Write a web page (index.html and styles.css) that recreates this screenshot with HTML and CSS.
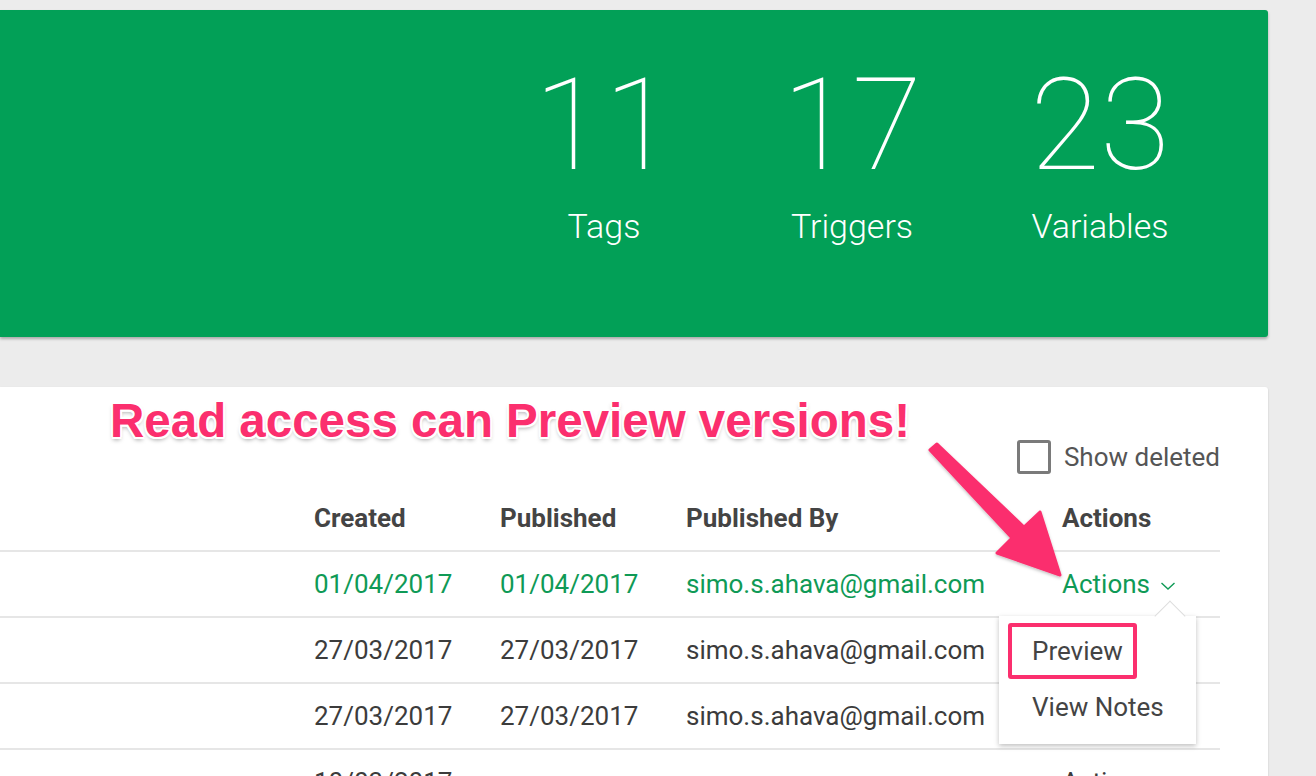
FILE: index.html
```html
<!DOCTYPE html>
<html>
<head>
<meta charset="utf-8">
<link rel="stylesheet" href="styles.css">
</head>
<body>
<div class="page">
  <section class="summary">
    <div class="stat"><div class="stat-num">11</div><div class="stat-label">Tags</div></div>
    <div class="stat"><div class="stat-num">17</div><div class="stat-label">Triggers</div></div>
    <div class="stat"><div class="stat-num">23</div><div class="stat-label">Variables</div></div>
  </section>

  <section class="versions">
    <div class="annotation">Read access can Preview versions!</div>
    <div class="toolbar">
      <label class="check"><span class="box"></span><span>Show deleted</span></label>
    </div>
    <div class="row head">
      <div></div><div>Created</div><div>Published</div><div>Published By</div><div>Actions</div>
    </div>
    <div class="row live">
      <div></div><div>01/04/2017</div><div>01/04/2017</div><div>simo.s.ahava@gmail.com</div>
      <div class="actions-cell">
        <span class="actions-link">Actions
          <svg class="chev" width="16" height="10" viewBox="0 0 16 10"><polyline points="1.5,2 8,8 14.5,2" fill="none" stroke="#0f9a56" stroke-width="1.4"/></svg>
        </span>
        <div class="menu">
          <div class="menu-caret"></div>
          <div class="menu-item first"><span class="highlight">Preview</span></div>
          <div class="menu-item">View Notes</div>
        </div>
      </div>
    </div>
    <div class="row">
      <div></div><div>27/03/2017</div><div>27/03/2017</div><div>simo.s.ahava@gmail.com</div><div>Actions</div>
    </div>
    <div class="row">
      <div></div><div>27/03/2017</div><div>27/03/2017</div><div>simo.s.ahava@gmail.com</div><div>Actions</div>
    </div>
    <div class="row">
      <div></div><div>10/03/2017</div><div></div><div></div><div>Actions</div>
    </div>
  </section>
</div>

<svg class="arrow" width="1316" height="776" viewBox="0 0 1316 776">
  <defs>
    <filter id="sh" x="-20%" y="-20%" width="140%" height="140%">
      <feDropShadow dx="0" dy="1.5" stdDeviation="1.5" flood-color="#000" flood-opacity="0.25"/>
    </filter>
  </defs>
  <path filter="url(#sh)" d="M930,450 L1012,538 L997,553 L1060,575 L1040,512 L1024,527 L937,444 Z" fill="#fb2f6e" stroke="#fb2f6e" stroke-width="3" stroke-linejoin="round"/>
</svg>
</body>
</html>
```

FILE: styles.css
```css
* { box-sizing: border-box; }

body {
  margin: 0;
  background: #ececec;
  font-family: Roboto, "Noto Sans", sans-serif;
  overflow: hidden;
  height: 776px;
}

.page {
  width: 1268px;
  padding-top: 10px;
}

.summary {
  height: 327px;
  background: #02a057;
  border-radius: 0 3px 3px 0;
  box-shadow: 0 2px 3px rgba(0, 0, 0, 0.28);
  display: flex;
  justify-content: flex-end;
  padding: 51px 44px 0 0;
}

.stat {
  width: 248px;
  display: flex;
  flex-direction: column;
  align-items: center;
  color: #fff;
}

.stat-num {
  font-size: 128px;
  line-height: 128px;
  font-weight: 100;
}

.stat-label {
  margin-top: 20px;
  font-size: 34px;
  line-height: 34px;
  font-weight: 300;
}

.versions {
  position: relative;
  margin-top: 50px;
  height: 420px;
  background: #fff;
  border-radius: 0 3px 0 0;
  box-shadow: 0 1px 2px rgba(0, 0, 0, 0.18);
  padding-right: 48px;
}

.annotation {
  position: absolute;
  left: 110px;
  top: 10px;
  font-family: "Liberation Sans", Arial, sans-serif;
  font-weight: 700;
  font-size: 47.5px;
  line-height: 47px;
  color: #fb2f6e;
  white-space: nowrap;
  text-shadow:
    2px 0 0 #fff, -2px 0 0 #fff, 0 2px 0 #fff, 0 -2px 0 #fff,
    1.5px 1.5px 0 #fff, -1.5px 1.5px 0 #fff, 1.5px -1.5px 0 #fff, -1.5px -1.5px 0 #fff,
    0 3px 4px rgba(0, 0, 0, 0.35);
  z-index: 3;
}

.toolbar {
  height: 99px;
  padding-top: 53px;
  display: flex;
  justify-content: flex-end;
}

.check {
  display: flex;
  align-items: center;
  height: 34px;
  gap: 13px;
  font-size: 26px;
  color: #555;
}

.box {
  width: 34px;
  height: 34px;
  border: 3px solid #7a7a7a;
  border-radius: 3px;
}

.row {
  display: grid;
  grid-template-columns: 314px 186px 186px 376px 1fr;
  align-items: center;
  height: 66px;
  border-bottom: 2px solid #e6e6e6;
  font-size: 26px;
  color: #3c3c3c;
  white-space: nowrap;
}

.row.head {
  font-weight: 700;
  color: #444;
}

.row.live {
  color: #0f9a56;
}

.actions-cell {
  position: relative;
  align-self: stretch;
  display: flex;
  align-items: center;
}

.actions-link {
  display: inline-flex;
  align-items: center;
  gap: 10px;
}

.chev {
  margin-top: 3px;
}

.menu {
  position: absolute;
  left: -63px;
  top: 64px;
  width: 197px;
  height: 128px;
  background: #fff;
  box-shadow: 0 2px 5px rgba(0, 0, 0, 0.25);
  padding-top: 7px;
  color: #444;
  z-index: 2;
}

.menu-caret {
  position: absolute;
  left: 160px;
  top: -11px;
  width: 22px;
  height: 22px;
  background: #fff;
  transform: rotate(45deg);
  border-top: 1px solid #ddd;
  border-left: 1px solid #ddd;
}

.menu-item {
  height: 56px;
  display: flex;
  align-items: center;
  padding-left: 33px;
}

.menu-item.first {
  padding-left: 9px;
}

.highlight {
  display: flex;
  align-items: center;
  height: 56px;
  border: 4px solid #fb2f6e;
  border-radius: 3px;
  padding: 0 10px 0 20px;
  position: relative;
  z-index: 1;
}

.arrow {
  position: absolute;
  left: 0;
  top: 0;
  pointer-events: none;
  z-index: 5;
}
```
